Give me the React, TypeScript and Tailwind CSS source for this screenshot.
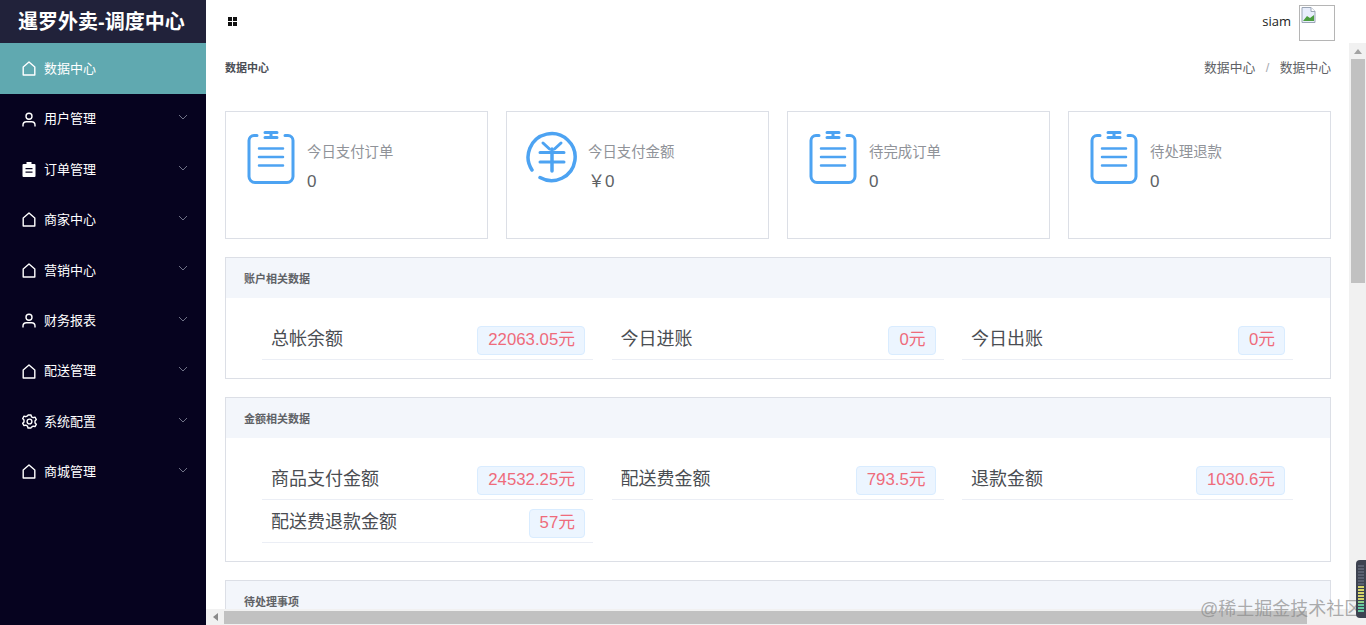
import type { ReactNode } from 'react';

const FONT = 'font-["Liberation_Sans","Noto_Sans_CJK_SC",sans-serif]';

function HomeIcon() {
  return (
    <svg width="14" height="15" viewBox="0 0 14 15" fill="none" stroke="currentColor" strokeWidth="1.4">
      <path d="M1.200 14V6L7 1l5.800 5v8z" strokeLinejoin="round" />
    </svg>
  );
}

function UserIcon() {
  return (
    <svg width="14" height="15" viewBox="0 0 14 15" fill="none" stroke="currentColor" strokeWidth="1.4">
      <circle cx="7" cy="4.200" r="3" />
      <path d="M1 14.500v-1.500c0-2 1.500-3.200 3.400-3.200h5.200c1.900 0 3.400 1.200 3.400 3.200v1.500" />
    </svg>
  );
}

function ClipboardIcon() {
  return (
    <svg width="14" height="15" viewBox="0 0 14 15" fill="currentColor">
      <path d="M4.500 0h5v2h3a1 1 0 0 1 1 1v11a1 1 0 0 1-1 1h-11a1 1 0 0 1-1-1V3a1 1 0 0 1 1-1h3zM3.500 6v1.300h7V6zm0 3.500v1.300h7V9.500z" fillRule="evenodd" />
    </svg>
  );
}

function GearIcon() {
  return (
    <svg width="15" height="15" viewBox="0 0 15 15" fill="none" stroke="currentColor" strokeWidth="1.400">
      <path d="M6 1h3l.5 1.800 1.700.9 1.800-.5 1.300 2.300-1.300 1.500 0 1.900 1.300 1.400-1.300 2.300-1.800-.5-1.700 1L9 14H6l-.5-1.900-1.700-1-1.800.5L.7 9.300 2 7.900V6L.7 4.500 2 2.200l1.800.5 1.700-.9z" strokeLinejoin="round" />
      <circle cx="7.500" cy="7.500" r="2.400" />
    </svg>
  );
}

function Chevron() {
  return (
    <svg width="10" height="6" viewBox="0 0 10 6" fill="none" stroke="#6f7286" strokeWidth="1">
      <path d="M1 1l4 4 4-4" />
    </svg>
  );
}

function OrderIcon() {
  return (
    <svg width="48" height="54" viewBox="0 0 48 54" fill="none" stroke="#4da3f2" strokeWidth="3" strokeLinecap="round" className="ml-[1px]">
      <path d="M10 4.500H7a5 5 0 0 0-5 5v36a6 6 0 0 0 6 6h32a6 6 0 0 0 6-6v-36a5 5 0 0 0-5-5h-3" />
      <path d="M18 1.500h12M18 6.500h12M24 1.500v5" />
      <path d="M12 17.500h24M12 26h24M12 34.500h24" strokeWidth="2.500" />
    </svg>
  );
}

function YuanIcon() {
  return (
    <svg width="52" height="52" viewBox="0 0 52 52" fill="none" stroke="#4da3f2" strokeWidth="3.500" strokeLinecap="round" className="-ml-[1px]">
      <path d="M6 39A23.500 23.500 0 1 1 14 46.500" />
      <path d="M17 12l6.500 6M35 12l-6.500 6M14 21.500h24M14 31h24" strokeWidth="3" />
      <path d="M26 18v22" />
    </svg>
  );
}

const menu: { label: string; icon: ReactNode }[] = [
  { label: '用户管理', icon: <UserIcon /> },
  { label: '订单管理', icon: <ClipboardIcon /> },
  { label: '商家中心', icon: <HomeIcon /> },
  { label: '营销中心', icon: <HomeIcon /> },
  { label: '财务报表', icon: <UserIcon /> },
  { label: '配送管理', icon: <HomeIcon /> },
  { label: '系统配置', icon: <GearIcon /> },
  { label: '商城管理', icon: <HomeIcon /> },
];

const stats = [
  { title: '今日支付订单', value: '0', icon: <OrderIcon /> },
  { title: '今日支付金额', value: '￥0', icon: <YuanIcon /> },
  { title: '待完成订单', value: '0', icon: <OrderIcon /> },
  { title: '待处理退款', value: '0', icon: <OrderIcon /> },
];

const accountRows = [
  { label: '总帐余额', value: '22063.05元' },
  { label: '今日进账', value: '0元' },
  { label: '今日出账', value: '0元' },
];

const moneyRows = [
  { label: '商品支付金额', value: '24532.25元' },
  { label: '配送费金额', value: '793.5元' },
  { label: '退款金额', value: '1030.6元' },
  { label: '配送费退款金额', value: '57元' },
];

const meterTicks = ['#5a6070', '#5a6070', '#5a6070', '#5a6070', '#5a6070', '#5a6070', '#5a6070', '#d6d46a', '#d6d46a', '#d6d46a', '#d6d46a', '#d6d46a', '#8fcf86', '#66c9a0', '#66c9a0', '#66c9a0'];

function Panel({ title, rows }: { title: string; rows: { label: string; value: string }[] }) {
  return (
    <div className="border border-[#dcdfe6] mb-[18px] bg-white">
      <div className="h-[40px] bg-[#f3f6fb] pl-[18px] flex items-center text-[11px] font-bold text-[#606266] pt-[2px]">{title}</div>
      <div className="grid grid-cols-[331px_332px_331px] gap-x-[18.5px] pl-[36px] pt-[19px] pb-[18px]">
        {rows.map((row) => (
          <div key={row.label} className="h-[43px] border-b border-[#ebeef5] pl-[9px] pr-[8px] flex items-center justify-between">
            <span className="text-[18px] text-[#4a4d52] relative top-[1px]">{row.label}</span>
            <span className="h-[29px] pl-[10px] pr-[9px] flex items-center rounded-[4px] bg-[#ecf5ff] border border-[#d9ecff] text-[16.800px] text-[#ef6b7b] relative top-[2px]">{row.value}</span>
          </div>
        ))}
      </div>
    </div>
  );
}

export default function App() {
  return (
    <div className={`${FONT} relative w-[1366px] h-[625px] overflow-hidden flex bg-white`}>
      {/* Sidebar */}
      <aside className="w-[206px] shrink-0 bg-[#06031f] text-white">
        <div className="h-[43px] bg-[#21223a] pl-[18px] flex items-center text-[20px] font-bold whitespace-nowrap">暹罗外卖-调度中心</div>
        <div className="h-[51px] bg-[#60a9b0] pl-[22px] flex items-center gap-[8px] text-[13px]">
          <HomeIcon />
          <span>数据中心</span>
        </div>
        {menu.map((item) => (
          <div key={item.label} className="h-[50.400px] pl-[22px] pr-[18px] flex items-center text-[13px]">
            <span className="w-[14px] flex justify-center"><span className="block">{item.icon}</span></span>
            <span className="ml-[8px] flex-1">{item.label}</span>
            <span className="relative top-[-2px]"><Chevron /></span>
          </div>
        ))}
      </aside>

      <div className="flex-1 min-w-0 flex flex-col">
        {/* Top bar */}
        <header className="h-[43px] shrink-0 flex items-center justify-between pl-[22px] pr-[31px]">
          <div className="grid grid-cols-2 gap-[1px] w-[9px]">
            <span className="w-[4px] h-[4px] bg-[#111]" />
            <span className="w-[4px] h-[4px] bg-[#111]" />
            <span className="w-[4px] h-[4px] bg-[#111]" />
            <span className="w-[4px] h-[4px] bg-[#111]" />
          </div>
          <div className="flex items-center gap-[8px] pt-[3px]">
            <span className='text-[13px] text-[#222] font-["Open_Sans",sans-serif] relative top-[-1px]'>siam</span>
            <div className="w-[36px] h-[36px] border border-[#b5b5b5] bg-white">
              <svg width="16" height="16" viewBox="0 0 16 16" className="mt-[1px] ml-[1px]">
                <path d="M1 .5h9l4 4v11H1z" fill="#e8eefc" stroke="#9aa5b5" />
                <path d="M2 14l4-5 3 2 4-3v6z" fill="#4c9e3f" />
                <path d="M10 .5v4h4" fill="#fff" stroke="#9aa5b5" />
              </svg>
            </div>
          </div>
        </header>

        <div className="flex-1 min-h-0 flex">
          {/* Scroll area */}
          <div className="flex-1 min-w-0 flex flex-col">
            <main className="flex-1 min-h-0 overflow-hidden pl-[19px] pr-[18px]">
              <div className="h-[68px] flex items-start justify-between pt-[17px]">
                <span className="text-[11px] font-bold text-[#4b4e55] leading-[16px]">数据中心</span>
                <span className="text-[12.800px] text-[#606266] leading-[16px]">
                  数据中心<span className="mx-[10.500px] text-[#a8abb2]">/</span>数据中心
                </span>
              </div>
              <div className="grid grid-cols-4 gap-[18px] mb-[18px]">
                {stats.map((s) => (
                  <div key={s.title} className="h-[128px] border border-[#dcdfe6] pt-[19px] pl-[20px] flex">
                    <div className="w-[61px] shrink-0">{s.icon}</div>
                    <div className="pt-[11px]">
                      <div className="text-[14.400px] text-[#909399] leading-[20px]">{s.title}</div>
                      <div className="text-[17px] text-[#606266] leading-[20px] mt-[10px]">{s.value}</div>
                    </div>
                  </div>
                ))}
              </div>
              <Panel title="账户相关数据" rows={accountRows} />
              <Panel title="金额相关数据" rows={moneyRows} />
              <Panel title="待处理事项" rows={[]} />
            </main>
            {/* Horizontal scrollbar */}
            <div className="h-[16px] shrink-0 bg-[#f1f1f1] flex items-center">
              <span className="w-[18px] flex justify-center">
                <span className="border-y-[4px] border-y-transparent border-r-[5px] border-r-[#8a8a8a]" />
              </span>
              <div className="w-[1083px] h-[13px] bg-[#c1c1c1]" />
            </div>
          </div>
          {/* Vertical scrollbar */}
          <div className="w-[17px] shrink-0 bg-[#f1f1f1] flex flex-col items-center">
            <span className="mt-[6px] mb-[5px] border-x-[4px] border-x-transparent border-b-[5px] border-b-[#a3a3a3]" />
            <div className="w-[14px] h-[224px] bg-[#c1c1c1]" />
          </div>
        </div>
      </div>

      {/* Watermark and overlay widget */}
      <div className="absolute left-[1200px] top-[598px] text-[18px] leading-[22px] whitespace-nowrap text-[#8a8a8a]/70">@稀土掘金技术社区</div>
      <div className="absolute left-[1356px] top-[560px] w-[10px] h-[58px] rounded-l-[4px] bg-[#3d4250] flex flex-col gap-[1px] pt-[5px] pl-[2px]">
        {meterTicks.map((color, i) => (
          <span key={i} className="h-[2px] w-[6px]" style={{ backgroundColor: color }} />
        ))}
      </div>
    </div>
  );
}
